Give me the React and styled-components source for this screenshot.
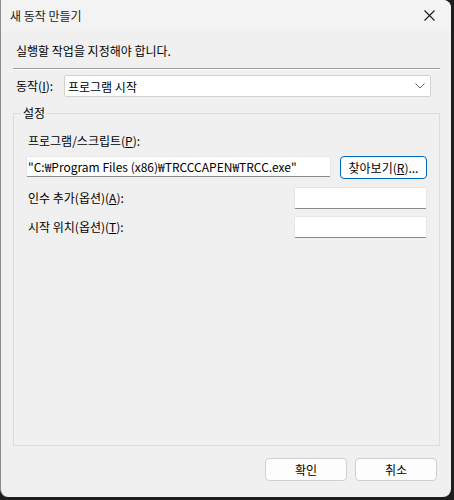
import React from "react";
import styled, { createGlobalStyle } from "styled-components";

const GlobalStyle = createGlobalStyle`
  html, body {
    margin: 0;
    padding: 0;
    background: #1d1d1d;
  }
  body {
    font-family: "Noto Sans CJK KR", "Noto Sans", sans-serif;
    font-size: 12px;
    color: #000;
  }
`;

function App() {
  return (
    <>
      <GlobalStyle />
      <Window>
        <TitleBar>
          <Title>새 동작 만들기</Title>
          <CloseButton aria-label="닫기">
            <svg width="11" height="11" viewBox="0 0 11 11">
              <path d="M0.5 0.5 L10.5 10.5 M10.5 0.5 L0.5 10.5" stroke="#1a1a1a" strokeWidth="1.1" fill="none" />
            </svg>
          </CloseButton>
        </TitleBar>
        <Body>
          <Instruction>실행할 작업을 지정해야 합니다.</Instruction>
          <Separator />
          <ActionRow>
            <FieldLabel>
              동작(<u>I</u>):
            </FieldLabel>
            <Select>
              <span>프로그램 시작</span>
              <svg width="10" height="6" viewBox="0 0 10 6">
                <path d="M0.5 0.5 L5 5 L9.5 0.5" stroke="#606060" strokeWidth="1" fill="none" />
              </svg>
            </Select>
          </ActionRow>
          <GroupBox>
            <Legend>설정</Legend>
            <GroupInner>
              <StackLabel>
                프로그램/스크립트(<u>P</u>):
              </StackLabel>
              <PathRow>
                <TextBox $width={305} $height={21}>
                  "C:₩Program Files (x86)₩TRCCCAPEN₩TRCC.exe"
                </TextBox>
                <Button $primary $width={87}>
                  찾아보기(<u>R</u>)...
                </Button>
              </PathRow>
              <OptionRow $gap={8}>
                <RowLabel>
                  인수 추가(옵션)(<u>A</u>):
                </RowLabel>
                <TextBox $width={133} $height={22} />
              </OptionRow>
              <OptionRow $gap={7}>
                <RowLabel>
                  시작 위치(옵션)(<u>T</u>):
                </RowLabel>
                <TextBox $width={133} $height={22} />
              </OptionRow>
            </GroupInner>
          </GroupBox>
          <Footer>
            <Button $width={82}>확인</Button>
            <Button $width={82}>취소</Button>
          </Footer>
        </Body>
      </Window>
    </>
  );
}

export default App;

const Window = styled.div`
  width: 451px;
  height: 497px;
  box-sizing: border-box;
  border-left: 1px solid #8c8c8c;
  border-radius: 0 8px 8px 8px;
  background: #f0f0f0;
  display: flex;
  flex-direction: column;
  overflow: hidden;
`;

const TitleBar = styled.div`
  height: 31px;
  flex: none;
  display: flex;
  align-items: center;
  justify-content: space-between;
  padding-left: 9px;
  background: #f3f3f3;
`;

const Title = styled.div`
  font-size: 12px;
  line-height: 16px;
  color: #1a1a1a;
`;

const CloseButton = styled.div`
  width: 46px;
  height: 31px;
  display: flex;
  align-items: center;
  justify-content: center;
  padding-left: 2px;
  box-sizing: border-box;
`;

const Body = styled.div`
  flex: 1;
  display: flex;
  flex-direction: column;
  padding: 0 11px 16px 12px;
`;

const Instruction = styled.div`
  margin-top: 10px;
  height: 20px;
  line-height: 20px;
  padding-left: 3px;
`;

const Separator = styled.div`
  margin-top: 7px;
  height: 0;
  border-top: 1px solid #a0a0a0;
  border-bottom: 1px solid #ffffff;
`;

const ActionRow = styled.div`
  margin-top: 5px;
  display: flex;
  align-items: center;
  padding-left: 3px;
  padding-right: 9px;
`;

const FieldLabel = styled.div`
  width: 48px;
  flex: none;
  line-height: 16px;
`;

const Select = styled.div`
  flex: 1;
  height: 22px;
  box-sizing: border-box;
  background: #ffffff;
  border: 1px solid #d2d2d2;
  border-radius: 2px;
  display: flex;
  align-items: center;
  justify-content: space-between;
  padding: 0 5px 0 3px;
`;

const GroupBox = styled.fieldset`
  flex: 1;
  margin: 8px 0 0 0;
  padding: 0;
  min-width: 0;
  border: 1px solid #dcdcdc;
  border-radius: 0;
  display: flex;
  flex-direction: column;
`;

const Legend = styled.legend`
  margin-left: 7px;
  padding: 0 2px;
  line-height: 16px;
  font-size: 12px;
`;

const GroupInner = styled.div`
  display: flex;
  flex-direction: column;
  padding: 0 12px 0 12px;
`;

const StackLabel = styled.div`
  margin-top: 10px;
  height: 20px;
  line-height: 20px;
  padding-left: 2px;
`;

const PathRow = styled.div`
  margin-top: 5px;
  display: flex;
  align-items: flex-start;
  justify-content: space-between;
`;

const OptionRow = styled.div`
  margin-top: ${(p) => p.$gap}px;
  display: flex;
  align-items: center;
  justify-content: space-between;
`;

const RowLabel = styled.div`
  padding-left: 2px;
  line-height: 16px;
`;

const TextBox = styled.div`
  width: ${(p) => p.$width}px;
  height: ${(p) => p.$height}px;
  box-sizing: border-box;
  background: #ffffff;
  border: 1px solid #e6e6e6;
  border-bottom-color: #8a8a8a;
  border-radius: 2px;
  display: flex;
  align-items: center;
  padding-left: 1px;
  white-space: nowrap;
  overflow: hidden;
`;

const Button = styled.div`
  width: ${(p) => p.$width}px;
  height: 23px;
  box-sizing: border-box;
  background: #fdfdfd;
  border: 1px solid ${(p) => (p.$primary ? "#0067c0" : "#d0d0d0")};
  border-radius: 4px;
  display: flex;
  align-items: center;
  justify-content: center;
  line-height: 16px;
`;

const Footer = styled.div`
  margin-top: 12px;
  display: flex;
  justify-content: flex-end;
  gap: 8px;
  padding-right: 3px;
`;
